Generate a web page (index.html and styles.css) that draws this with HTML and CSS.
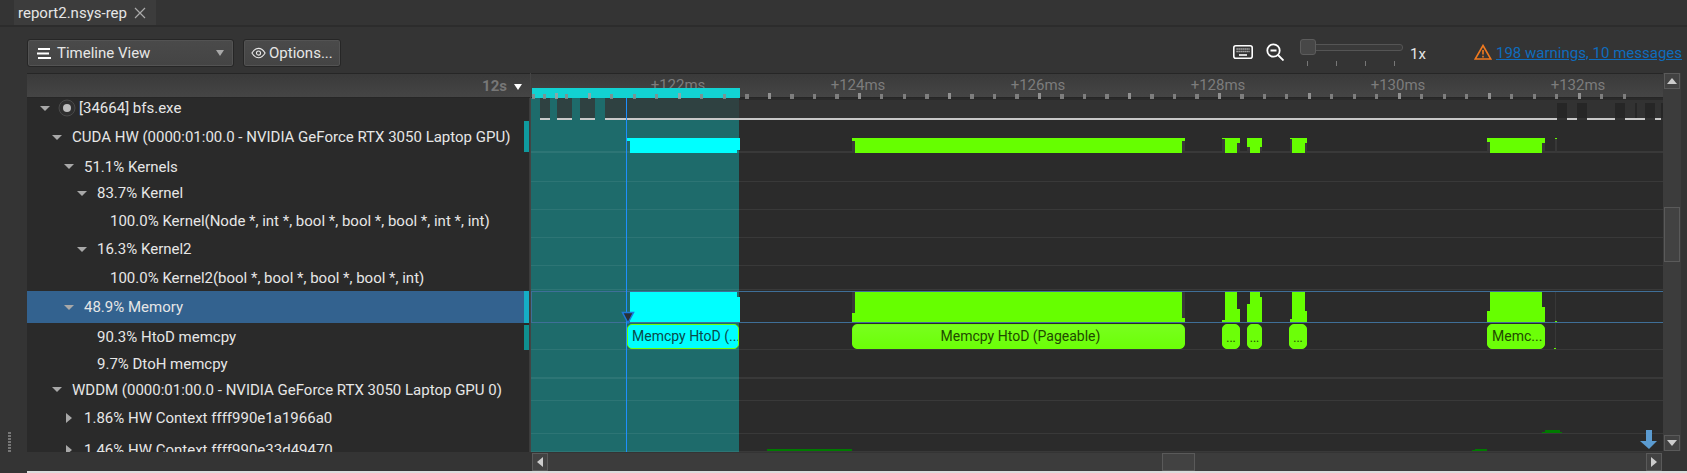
FILE: index.html
```html
<!DOCTYPE html>
<html lang="en">
<head>
    <meta charset="UTF-8">
    <title>report2.nsys-rep</title>
    <link rel="stylesheet" href="styles.css">
</head>
<body>
<div class="app">
    <div class="tabs">
        <div class="tab">report2.nsys-rep
            <svg class="tab-close" viewBox="0 0 12 12"><path d="M1 1L11 11M11 1L1 11"/></svg>
        </div>
    </div>

    <div class="toolbar">
        <button class="btn btn-view">
            <svg class="ico-menu" viewBox="0 0 14 11"><path d="M1 1H13M0 5.500H12M1 10H14"/></svg>
            <span>Timeline View</span>
            <i class="caret caret-view"></i>
        </button>
        <button class="btn btn-options">
            <svg class="ico-eye" viewBox="0 0 16 12"><path d="M1 6C3 2.500 5.500 1 8 1s5 1.500 7 5c-2 3.500-4.500 5-7 5S3 9.500 1 6z"/><circle cx="8" cy="6" r="2.200"/></svg>
            <span>Options...</span>
        </button>

        <div class="tools">
            <svg class="ico-keys" viewBox="0 0 20 14"><rect x="0.800" y="0.800" width="18.400" height="12.400" rx="2"/><path class="keys" d="M3.500 4H16.500M3.500 6.500H16.500"/><path d="M6 10H14"/></svg>
            <svg class="ico-zoom" viewBox="0 0 18 18"><circle cx="7.500" cy="7.500" r="6.200"/><path d="M4.500 7.500H10.500M12 12L17.500 17.500"/></svg>
            <div class="slider">
                <div class="slider-track"></div>
                <div class="slider-thumb"></div>
                <div class="slider-ticks"><i></i><i></i><i></i><i></i></div>
            </div>
            <span class="scale">1x</span>
            <svg class="ico-warn" viewBox="0 0 18 16"><path d="M9 1.500L16.800 15H1.200z"/><path d="M9 6V10.500M9 11.800V13.500"/></svg>
            <a class="warn-link">198 warnings, 10 messages</a>
        </div>
    </div>

    <div class="report">
        <div class="report-main">
            <div class="report-left">
                <div class="head head-left">
                    <span class="head-time">12s</span>
                    <i class="caret caret-head"></i>
                </div>
                <div class="tree">
                    <div class="row row-high level-proc">
                        <i class="arrow arrow-proc"></i>
                        <svg class="ico-proc" viewBox="0 0 18 18"><circle class="ring" cx="9" cy="9" r="8"/><circle class="dot" cx="9" cy="9" r="4"/></svg>
                        [34664] bfs.exe
                    </div>
                    <div class="row level-0"><i class="arrow"></i>CUDA HW (0000:01:00.0 - NVIDIA GeForce RTX 3050 Laptop GPU)<b class="marker marker-cuda"></b></div>
                    <div class="row level-1"><i class="arrow"></i>51.1% Kernels</div>
                    <div class="row row-high level-2"><i class="arrow"></i>83.7% Kernel</div>
                    <div class="row row-high level-3">100.0% Kernel(Node *, int *, bool *, bool *, bool *, int *, int)</div>
                    <div class="row row-high level-2"><i class="arrow"></i>16.3% Kernel2</div>
                    <div class="row level-3">100.0% Kernel2(bool *, bool *, bool *, bool *, int)</div>
                    <div class="row row-selected level-1"><i class="arrow"></i>48.9% Memory<b class="marker marker-mem"></b></div>
                    <div class="row level-2"><i class="arrow arrow-none"></i>90.3% HtoD memcpy<b class="marker marker-htod"></b></div>
                    <div class="row level-2"><i class="arrow arrow-none"></i>9.7% DtoH memcpy</div>
                    <div class="row level-0"><i class="arrow"></i>WDDM (0000:01:00.0 - NVIDIA GeForce RTX 3050 Laptop GPU 0)</div>
                    <div class="row level-1"><i class="arrow arrow-right"></i>1.86% HW Context ffff990e1a1966a0</div>
                    <div class="row level-1"><i class="arrow arrow-right"></i>1.46% HW Context ffff990e33d49470</div>
                </div>
            </div>

            <div class="report-right">
                <div class="head head-right">
                    <div class="time-labels">
                        <span>+122ms</span><span>+124ms</span><span>+126ms</span>
                        <span>+128ms</span><span>+130ms</span><span>+132ms</span>
                    </div>
                    <div class="range-bar"></div>
                    <div class="ticks"></div>
                </div>
                <div class="chart">
                    <svg class="chart-svg" viewBox="531 98 1132 354">
                        <!-- process row -->
                        <rect x="531" y="98" width="1132" height="22" fill="#323232"/>
                        <rect x="531" y="98" width="1132" height="2" fill="#2a2a2a"/>
                        <rect x="531" y="98" width="208" height="354" fill="#1e6b6b"/>
                        <g fill="#2f4141">
                            <rect x="540" y="98" width="10" height="20"/>
                            <rect x="557" y="98" width="15" height="20"/>
                            <rect x="580" y="98" width="15" height="20"/>
                            <rect x="605" y="98" width="134" height="20"/>
                        </g>
                        <g fill="#262626">
                            <rect x="1557" y="103" width="10" height="15"/>
                            <rect x="1577" y="103" width="10" height="15"/>
                            <rect x="1615" y="103" width="10" height="15"/>
                            <rect x="1635" y="103" width="2" height="15"/>
                            <rect x="1645" y="103" width="10" height="15"/>
                            <rect x="1661" y="103" width="2" height="15"/>
                        </g>
                        <g fill="#c8c8c8">
                            <rect x="540" y="118" width="10" height="2"/>
                            <rect x="557" y="118" width="15" height="2"/>
                            <rect x="580" y="118" width="15" height="2"/>
                            <rect x="605" y="118" width="952" height="2"/>
                            <rect x="1567" y="118" width="10" height="2"/>
                            <rect x="1587" y="118" width="28" height="2"/>
                            <rect x="1625" y="118" width="20" height="2"/>
                            <rect x="1655" y="118" width="6" height="2"/>
                        </g>

                        <!-- row lines -->
                        <g fill="#ffffff" fill-opacity="0.07">
                            <rect x="531" y="151" width="1132" height="2"/>
                            <rect x="531" y="181" width="1132" height="1"/>
                            <rect x="531" y="209" width="1132" height="1"/>
                            <rect x="531" y="237" width="1132" height="1"/>
                            <rect x="531" y="265" width="1132" height="1"/>
                            <rect x="531" y="289" width="1132" height="1"/>
                            <rect x="531" y="349" width="1132" height="1"/>
                            <rect x="531" y="377" width="1132" height="2"/>
                            <rect x="531" y="400" width="1132" height="1"/>
                            <rect x="531" y="433" width="1132" height="1"/>
                            <rect x="531" y="451" width="1132" height="1"/>
                        </g>

                        <!-- dark edges next to the bars -->
                        <g fill="#383838">
                            <rect x="852" y="141" width="3" height="12"/>
                            <rect x="1182" y="141" width="3" height="12"/>
                            <rect x="1222" y="139" width="3" height="14"/>
                            <rect x="1237" y="143" width="3" height="10"/>
                            <rect x="1247" y="147" width="3" height="6"/>
                            <rect x="1260" y="147" width="2" height="6"/>
                            <rect x="1290" y="139" width="2" height="14"/>
                            <rect x="1305" y="143" width="2" height="10"/>
                            <rect x="1487" y="142" width="3" height="11"/>
                            <rect x="1542" y="143" width="3" height="10"/>
                            <rect x="1555" y="139" width="2" height="14"/>
                            <rect x="1182" y="292" width="3" height="26"/>
                            <rect x="852" y="292" width="3" height="21"/>
                            <rect x="1555" y="292" width="1" height="57"/>
                        </g>

                        <!-- CUDA HW row -->
                        <polygon class="bar-cyan" points="627,138 740,138 740,150 737,150 737,153 630,153 630,141 627,141"/>
                        <g class="bar-green">
                            <polygon points="852,138 1185,138 1185,141 1182,141 1182,153 855,153 855,141 852,141"/>
                            <polygon points="1222,138 1240,138 1240,143 1237,143 1237,153 1225,153 1225,139 1222,139"/>
                            <polygon points="1247,138 1262,138 1262,147 1260,147 1260,153 1250,153 1250,147 1247,147"/>
                            <polygon points="1290,138 1307,138 1307,143 1305,143 1305,153 1292,153 1292,139 1290,139"/>
                            <polygon points="1487,138 1545,138 1545,143 1542,143 1542,153 1490,153 1490,142 1487,142"/>
                            <rect x="1555" y="138" width="2" height="1"/>
                        </g>

                        <!-- Memory row -->
                        <polygon class="bar-cyan" points="630,292 737,292 737,297 740,297 740,322 630,322"/>
                        <g class="bar-green">
                            <polygon points="855,292 1182,292 1182,318 1185,318 1185,322 852,322 852,313 855,313"/>
                            <polygon points="1225,292 1237,292 1237,309 1240,309 1240,322 1222,322 1222,320 1225,320"/>
                            <polygon points="1250,292 1260,292 1260,297 1262,297 1262,322 1247,322 1247,304 1250,304"/>
                            <polygon points="1292,292 1305,292 1305,311 1307,311 1307,322 1290,322 1290,319 1292,319"/>
                            <polygon points="1490,292 1542,292 1542,307 1545,307 1545,322 1487,322 1487,311 1490,311"/>
                            <rect x="1555" y="321" width="2" height="1"/>
                            <rect x="1554" y="348" width="2" height="1"/>
                        </g>

                        <!-- selected row outline -->
                        <g fill="#3f6f98">
                            <rect x="531" y="291" width="1132" height="1"/>
                            <rect x="531" y="322" width="1132" height="1"/>
                            <rect x="531" y="291" width="1" height="32"/>
                        </g>

                        <!-- HW context bars -->
                        <g fill="#007a00">
                            <polygon points="1545,430 1560,430 1560,432 1562,432 1562,433 1542,433 1542,432 1545,432"/>
                            <polygon points="767,449 852,449 852,451 767,451"/>
                            <polygon points="1475,449 1487,449 1487,451 1472,451 1472,450 1475,450"/>
                        </g>

                        <!-- cursor -->
                        <rect x="626" y="98" width="1" height="354" fill="#1e8fff"/>
                        <polygon points="622.500,312.500 633.500,312.500 628,323" fill="#2a3038" stroke="#1e78d8" stroke-width="1.500"/>

                        <!-- scroll to bottom -->
                        <polygon points="1646,430 1652,430 1652,441 1657,441 1649,449 1640,441 1646,441" fill="#5b9bd0"/>
                    </svg>

                    <div class="event event-cyan ev-a"><span>Memcpy HtoD (...</span></div>
                    <div class="event event-center ev-b"><span>Memcpy HtoD (Pageable)</span></div>
                    <div class="event event-small ev-c"><span>...</span></div>
                    <div class="event event-small ev-d"><span>...</span></div>
                    <div class="event event-small ev-e"><span>...</span></div>
                    <div class="event ev-f"><span>Memc...</span></div>
                </div>
            </div>

            <div class="vscroll">
                <div class="sb-btn"><i class="sb-up"></i></div>
                <div class="vscroll-track"><div class="vscroll-thumb"></div></div>
                <div class="sb-btn"><i class="sb-down"></i></div>
            </div>
        </div>

        <div class="hscroll">
            <div class="sb-btn sb-btn-h"><i class="sb-left"></i></div>
            <div class="hscroll-track"><div class="hscroll-thumb"></div></div>
            <div class="sb-btn sb-btn-h"><i class="sb-right"></i></div>
        </div>
        <div class="bottom-line"></div>
    </div>

    <div class="grip"></div>
</div>
</body>
</html>
```

FILE: styles.css
```css
html, body {
    margin: 0;
    padding: 0;
    background: #343434;
}

.app {
    position: relative;
    width: 1687px;
    height: 473px;
    overflow: hidden;
    display: flex;
    flex-direction: column;
    font-family: Roboto, "Liberation Sans", sans-serif;
    font-size: 15px;
    color: #e6e6e6;
    background: #343434;
}

/* tab strip */
.tabs {
    height: 25px;
    padding-left: 14px;
    border-bottom: 2px solid #2c2c2c;
    flex: none;
}

.tab {
    width: 138px;
    height: 25px;
    padding-left: 4px;
    display: flex;
    align-items: center;
    gap: 7px;
    background: #3c3c3c;
}

.tab-close {
    width: 12px;
    height: 12px;
    fill: none;
    stroke: #aaa;
    stroke-width: 1.2;
}

/* toolbar */
.toolbar {
    height: 46px;
    flex: none;
    display: flex;
    align-items: flex-start;
    padding: 12px 0 0 27px;
    gap: 9px;
    box-sizing: border-box;
}

.btn {
    height: 28px;
    display: flex;
    align-items: center;
    padding: 0;
    border: 1px solid #262626;
    border-radius: 3px;
    background: linear-gradient(#4a4a4a, #444);
    box-shadow: inset 0 0 0 1px #535353;
    color: #e6e6e6;
    font: inherit;
}

.btn-view {
    width: 207px;
    padding-left: 9px;
}

.btn-options {
    width: 98px;
    padding-left: 7px;
}

.ico-menu {
    width: 14px;
    height: 11px;
    margin-right: 6px;
    fill: none;
    stroke: #fff;
    stroke-width: 2;
}

.ico-eye {
    width: 15px;
    height: 12px;
    margin-right: 3px;
    fill: none;
    stroke: #e6e6e6;
    stroke-width: 1.2;
}

.caret {
    display: block;
    width: 0;
    height: 0;
    border-left: 4.5px solid transparent;
    border-right: 4.5px solid transparent;
    border-top: 6px solid #a8a8a8;
}

.caret-view {
    margin-left: auto;
    margin-right: 9px;
}

.tools {
    margin-left: auto;
    display: flex;
    align-items: flex-start;
    padding-right: 5px;
}

.ico-keys {
    width: 20px;
    height: 14px;
    margin: 6px 13px 0 0;
    fill: none;
    stroke: #fff;
    stroke-width: 1.600;
}

.ico-keys .keys {
    stroke: #d0d0d0;
    stroke-width: 1.400;
    stroke-dasharray: 1.200 0.800;
}

.ico-zoom {
    width: 18px;
    height: 18px;
    margin: 4px 16px 0 0;
    fill: none;
    stroke: #fff;
    stroke-width: 1.800;
}

.slider {
    position: relative;
    width: 103px;
    height: 27px;
    margin-right: 7px;
}

.slider-track {
    position: absolute;
    left: 2px;
    right: 0;
    top: 5px;
    height: 5px;
    border: 1px solid #555;
    border-radius: 3px;
    background: #3a3a3a;
}

.slider-thumb {
    position: absolute;
    left: 0;
    top: 0;
    width: 14px;
    height: 14px;
    border: 1px solid #5c5c5c;
    border-radius: 3px;
    background: #474747;
}

.slider-ticks {
    position: absolute;
    left: 7px;
    top: 22px;
    width: 88px;
    display: flex;
    justify-content: space-between;
}

.slider-ticks i {
    display: block;
    width: 1px;
    height: 5px;
    background: #777;
}

.scale {
    width: 64px;
    margin-top: 6px;
    font-size: 15px;
}

.ico-warn {
    width: 18px;
    height: 16px;
    margin: 5px 4px 0 0;
    fill: none;
    stroke: #f07a20;
    stroke-width: 1.600;
}

.warn-link {
    margin-top: 5px;
    color: #0f6cbd;
    text-decoration: underline;
    white-space: nowrap;
}

/* report */
.report {
    margin-left: 27px;
    flex: 1;
    display: flex;
    flex-direction: column;
    min-height: 0;
}

.report-main {
    height: 379px;
    display: flex;
    flex: none;
}

.report-left {
    width: 503px;
    flex: none;
    display: flex;
    flex-direction: column;
}

.report-right {
    width: 1133px;
    flex: none;
    display: flex;
    flex-direction: column;
    border-left: 1px solid #444;
    box-sizing: border-box;
}

.head {
    height: 25px;
    flex: none;
    box-sizing: border-box;
    border-top: 1px solid #262626;
    border-bottom: 1px solid #262626;
    background: linear-gradient(#3a3a3a, #454545);
}

.head-left {
    display: flex;
    align-items: center;
    justify-content: flex-end;
    padding: 0 8px 0 0;
    gap: 7px;
}

.head-time {
    color: #777;
    font-weight: 700;
    font-size: 15px;
}

.caret-head {
    border-top-color: #fff;
    margin-top: 2px;
}

.head-right {
    position: relative;
}

.time-labels {
    display: flex;
    padding-left: 57px;
    color: #7c7c7c;
    line-height: 22px;
    overflow: hidden;
}

.time-labels span {
    width: 180px;
    flex: none;
    text-align: center;
}

.range-bar {
    position: absolute;
    z-index: 1;
    left: 1px;
    top: 14px;
    width: 208px;
    height: 10px;
    background: #12d2d2;
}

/* small tick every 22.5px, larger one every 90px */
.ticks {
    position: absolute;
    z-index: 2;
    left: 0;
    top: 19px;
    width: 1113px;
    height: 6px;
    opacity: 0.85;
    background-image:
        repeating-linear-gradient(90deg, #a0a0a0 0 3px, transparent 3px 90px),
        repeating-linear-gradient(90deg, #8a8a8a 0 3px, transparent 3px 22.500px);
    background-size: 100% 6px, 100% 5px;
    background-position: 57px 0, 12px 1px;
    background-repeat: repeat-x;
}

/* tree */
.tree {
    height: 354px;
    overflow: hidden;
    display: grid;
    grid-template-rows: 24px 30px 29px 28px 28px 28px 26px 32px 27px 28px 23px 33px 31px;
    background: #2a2a2a;
    border-right: 1px solid #3c3c3c;
}

.row {
    position: relative;
    display: flex;
    align-items: center;
    white-space: nowrap;
}

.row-high {
    padding-bottom: 4px;
    box-sizing: border-box;
}

.row-selected {
    background: linear-gradient(90deg, #33628f 0 497px, transparent 497px);
}

.level-proc { padding-left: 13px; }
.level-0 { padding-left: 25px; }
.level-1 { padding-left: 37px; }
.level-2 { padding-left: 50px; }
.level-3 { padding-left: 83px; }

.arrow {
    display: block;
    flex: none;
    width: 0;
    height: 0;
    margin-right: 10px;
    border-left: 5px solid transparent;
    border-right: 5px solid transparent;
    border-top: 5px solid #a8a8a8;
}

.arrow-proc {
    margin-right: 5px;
}

.arrow-none {
    border: none;
    width: 10px;
}

.arrow-right {
    width: 0;
    margin-left: 2px;
    margin-right: 12px;
    border-top: 5px solid transparent;
    border-bottom: 5px solid transparent;
    border-left: 6px solid #a8a8a8;
    border-right: none;
}

.ico-proc {
    width: 18px;
    height: 18px;
    margin: 0 3px 0 3px;
}

.ico-proc .ring {
    fill: #2f2f2f;
    stroke: #4a4a4a;
}

.ico-proc .dot {
    fill: #bdbdbd;
}

.marker {
    position: absolute;
    right: -1px;
    width: 6px;
}

.marker-cuda { top: -1px; height: 31px; background: #0f9a9f; }
.marker-mem { top: 0; height: 32px; background: #15aec5; }
.marker-htod { top: 2px; height: 25px; background: #0f8f8f; }

/* chart */
.chart {
    position: relative;
    height: 354px;
    overflow: hidden;
    background: #2b2b2b;
}

.chart-svg {
    display: block;
    width: 1132px;
    height: 354px;
}

.bar-cyan { fill: #00ffff; }
.bar-green { fill: #66ff00; }

.event {
    position: absolute;
    top: 226px;
    height: 25px;
    box-sizing: border-box;
    display: flex;
    align-items: center;
    justify-content: flex-start;
    overflow: hidden;
    padding: 0 0 2px 4px;
    border-radius: 5px;
    border: 1px solid #6cff08;
    background: #6cff08;
    color: #1f4a00;
    font-size: 14px;
    white-space: nowrap;
}

.event-cyan {
    background: #00ffff;
    color: #0b4a4a;
}

.event-center {
    justify-content: center;
    background: linear-gradient(#78ff1e, #6cff08);
}

.event-small {
    justify-content: center;
    padding: 2px 0 0;
    font-size: 12px;
}

.ev-a { left: 96px; width: 112px; }
.ev-b { left: 321px; width: 333px; }
.ev-c { left: 691px; width: 18px; }
.ev-d { left: 716px; width: 15px; }
.ev-e { left: 758px; width: 18px; }
.ev-f { left: 956px; width: 58px; }

/* scrollbars */
.vscroll {
    width: 18px;
    flex: none;
    display: flex;
    flex-direction: column;
    background: #3c3c3c;
    box-sizing: border-box;
    padding: 0 1px;
    height: 378px;
}

.sb-btn {
    height: 16px;
    flex: none;
    display: flex;
    align-items: center;
    justify-content: center;
    border: 1px solid #5a5a5a;
    box-sizing: border-box;
    background: #424242;
}

.sb-btn-h {
    width: 16px;
    height: 18px;
}

.sb-up, .sb-down, .sb-left, .sb-right {
    display: block;
    width: 0;
    height: 0;
}

.sb-up {
    border-left: 5px solid transparent;
    border-right: 5px solid transparent;
    border-bottom: 6px solid #ccc;
}

.sb-down {
    border-left: 5px solid transparent;
    border-right: 5px solid transparent;
    border-top: 6px solid #ccc;
}

.sb-left {
    border-top: 5px solid transparent;
    border-bottom: 5px solid transparent;
    border-right: 6px solid #ccc;
}

.sb-right {
    border-top: 5px solid transparent;
    border-bottom: 5px solid transparent;
    border-left: 6px solid #ccc;
}

.vscroll-track {
    flex: 1;
    padding-top: 118px;
}

.vscroll-thumb {
    height: 55px;
    border: 1px solid #5a5a5a;
    box-sizing: border-box;
    background: #424242;
}

.hscroll {
    height: 18px;
    flex: none;
    margin-top: 1px;
    margin-left: 505px;
    width: 1130px;
    display: flex;
    background: #3c3c3c;
}

.hscroll-track {
    flex: 1;
    padding-left: 614px;
}

.hscroll-thumb {
    width: 33px;
    height: 18px;
    border: 1px solid #5a5a5a;
    box-sizing: border-box;
    background: #424242;
}

.bottom-line {
    height: 2px;
    background: #dcdcdc;
}

/* dock grip on the far left */
.grip {
    position: absolute;
    left: 8px;
    top: 432px;
    width: 3px;
    height: 21px;
    background: repeating-linear-gradient(#777 0 2px, transparent 2px 3px);
}
```
